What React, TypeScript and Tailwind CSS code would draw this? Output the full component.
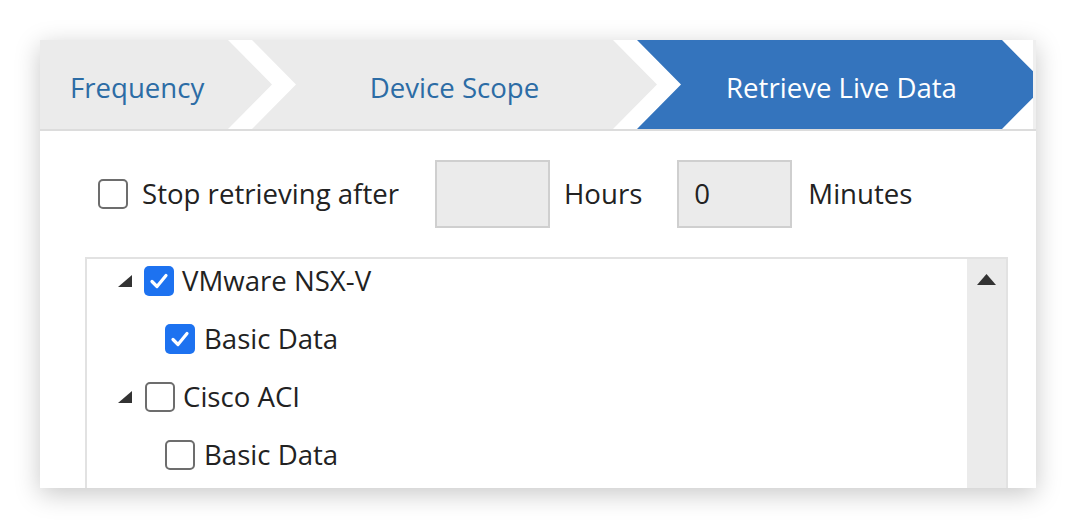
import React from "react";

const font = { fontFamily: '"Open Sans", "Noto Sans", sans-serif' };

function Check({ checked }: { checked: boolean }) {
  if (checked) {
    return (
      <div className="w-[30px] h-[30px] rounded-[5px] bg-[#1d72f0] flex items-center justify-center shrink-0">
        <svg width="22" height="22" viewBox="0 0 22 22">
          <path d="M4 11.5 L9 16.5 L18 5.5" fill="none" stroke="#fff" strokeWidth="3.2" strokeLinecap="round" strokeLinejoin="round" />
        </svg>
      </div>
    );
  }
  return <div className="w-[30px] h-[30px] rounded-[5px] border-2 border-[#6d6d6d] bg-white shrink-0" />;
}

function Tri() {
  return (
    <svg width="14" height="12" viewBox="0 0 14 12" className="shrink-0">
      <polygon points="14,0 14,12 0,12" fill="#333" />
    </svg>
  );
}

export default function App() {
  return (
    <div className="w-[1076px] h-[528px] bg-white pt-[40px] pl-[40px]" style={font}>
      <div className="w-[996px] h-[448px] bg-white overflow-hidden shadow-[0_6px_24px_rgba(0,0,0,0.22)] flex flex-col">
        {/* Tabs */}
        <div className="flex h-[91px] border-b-2 border-[#dcdcdc] shrink-0">
          <div className="w-[993px] h-[89px] bg-white overflow-hidden flex text-[27.6px]">
            <div className="w-[232px] shrink-0 h-full bg-[#ebebeb] flex items-center pt-[7px] pl-[30px] text-[#2c6ca5] [clip-path:polygon(0_0,188px_0,232px_50%,188px_100%,0_100%)]">
              Frequency
            </div>
            <div className="w-[405px] shrink-0 ml-[-20px] h-full bg-[#ebebeb] flex items-center justify-center pt-[7px] text-[#2c6ca5] [clip-path:polygon(0_0,361px_0,405px_50%,361px_100%,0_100%,44px_50%)]">
              Device Scope
            </div>
            <div className="w-[409px] shrink-0 ml-[-20px] h-full bg-[#3474bd] flex items-center justify-center pt-[7px] text-white [clip-path:polygon(0_0,365px_0,409px_50%,365px_100%,0_100%,44px_50%)]">
              Retrieve Live Data
            </div>
          </div>
          <div className="flex-1 bg-[#efefef]" />
        </div>

        {/* Stop row */}
        <div className="flex items-center pt-[29px] pl-[58px] text-[27.6px] text-[#222]">
          <Check checked={false} />
          <span className="ml-[14px]">Stop retrieving after</span>
          <div className="ml-[36px] w-[115px] h-[68px] bg-[#ebebeb] border-2 border-[#cfcfcf]" />
          <span className="ml-[14px]">Hours</span>
          <div className="ml-[35px] w-[115px] h-[68px] bg-[#ebebeb] border-2 border-[#cfcfcf] flex items-center pl-[15px]">0</div>
          <span className="ml-[16px]">Minutes</span>
        </div>

        {/* Tree */}
        <div className="ml-[45px] mt-[29px] w-[923px] flex-1 border-2 border-b-0 border-[#e2e2e2] flex text-[27.6px] text-[#222]">
          <div className="flex-1 flex flex-col gap-[14px]">
            <div className="h-[44px] flex items-center pl-[31px]">
              <Tri />
              <div className="ml-[12px]"><Check checked={true} /></div>
              <span className="ml-[8px]">VMware NSX-V</span>
            </div>
            <div className="h-[44px] flex items-center pl-[78px]">
              <Check checked={true} />
              <span className="ml-[9px]">Basic Data</span>
            </div>
            <div className="h-[44px] flex items-center pl-[31px]">
              <Tri />
              <div className="ml-[13px]"><Check checked={false} /></div>
              <span className="ml-[8px]">Cisco ACI</span>
            </div>
            <div className="h-[44px] flex items-center pl-[78px]">
              <Check checked={false} />
              <span className="ml-[9px]">Basic Data</span>
            </div>
          </div>
          <div className="w-[39px] bg-[#ebebeb] flex justify-center pt-[15px]">
            <svg width="19" height="11" viewBox="0 0 19 11">
              <polygon points="9.5,0 19,11 0,11" fill="#333" />
            </svg>
          </div>
        </div>
      </div>
    </div>
  );
}
